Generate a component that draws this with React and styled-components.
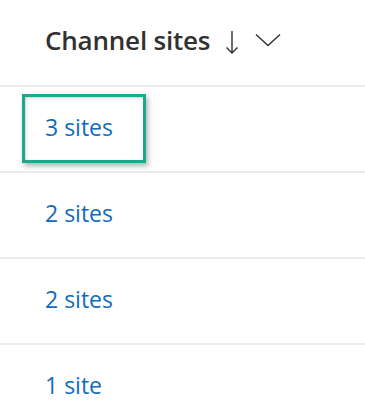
import React from "react";
import styled, { createGlobalStyle } from "styled-components";

const Global = createGlobalStyle`
  html, body { margin: 0; padding: 0; background: #ffffff; }
  body { font-family: "Open Sans", "Noto Sans", sans-serif; }
`;

const Column = styled.div`
  display: flex;
  flex-direction: column;
  width: 365px;
`;

const Header = styled.div`
  box-sizing: content-box;
  height: 79px;
  display: flex;
  align-items: center;
  padding-left: 45px;
  padding-bottom: 6px;
  border-bottom: 2px solid #edebe9;
  color: #323130;
`;

const Title = styled.span`
  font-size: 26px;
  font-weight: 600;
  letter-spacing: -0.2px;
`;

const Row = styled.div`
  height: 80px;
  padding-bottom: 4px;
  display: flex;
  align-items: center;
  padding-left: ${(p) => (p.$focused ? "22px" : "45px")};
  border-bottom: 2px solid #edebe9;
`;

const Link = styled.a`
  font-size: 23px;
  color: #0f6cbd;
  text-decoration: none;
`;

const FocusBox = styled.div`
  box-sizing: border-box;
  width: 124px;
  height: 69px;
  margin-top: 2px;
  border: 3px solid #19a98b;
  display: flex;
  align-items: center;
  padding-left: 20px;
  padding-bottom: 3px;
  box-shadow: 2px 3px 5px rgba(0, 0, 0, 0.3), inset 1px 1px 3px rgba(0, 0, 0, 0.2);
`;

const Icon = styled.svg`
  display: block;
  margin-left: ${(p) => p.$ml}px;
  margin-top: ${(p) => p.$mt || 0}px;
`;

export default function App() {
  const rows = ["3 sites", "2 sites", "2 sites", "1 site"];
  return (
    <>
      <Global />
      <Column>
        <Header>
          <Title>Channel sites</Title>
          <Icon $ml={15} $mt={5} width="14" height="25" viewBox="0 0 14 25">
            <path d="M7 1 V23 M1.5 17.5 L7 23 L12.5 17.5" fill="none" stroke="#323130" strokeWidth="1.4" />
          </Icon>
          <Icon $ml={16} width="26" height="14" viewBox="0 0 26 14">
            <path d="M1 1.5 L13 12.5 L25 1.5" fill="none" stroke="#323130" strokeWidth="1.4" />
          </Icon>
        </Header>
        {rows.map((r, i) =>
          i === 0 ? (
            <Row key={i} $focused>
              <FocusBox>
                <Link href="#">{r}</Link>
              </FocusBox>
            </Row>
          ) : (
            <Row key={i}>
              <Link href="#">{r}</Link>
            </Row>
          )
        )}
      </Column>
    </>
  );
}
